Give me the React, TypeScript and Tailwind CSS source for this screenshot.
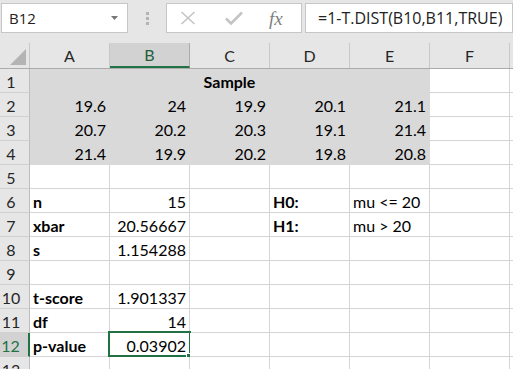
import React from "react";

const CELL_FONT = { fontFamily: "Lato, 'Liberation Sans', sans-serif" } as React.CSSProperties;

type C = { v?: string; b?: boolean; r?: boolean; g?: boolean };

const gridRows: C[][] = [
  [],
  [
    { v: "19.6", r: true, g: true },
    { v: "24", r: true, g: true },
    { v: "19.9", r: true, g: true },
    { v: "20.1", r: true, g: true },
    { v: "21.1", r: true, g: true },
    {},
    {},
  ],
  [
    { v: "20.7", r: true, g: true },
    { v: "20.2", r: true, g: true },
    { v: "20.3", r: true, g: true },
    { v: "19.1", r: true, g: true },
    { v: "21.4", r: true, g: true },
    {},
    {},
  ],
  [
    { v: "21.4", r: true, g: true },
    { v: "19.9", r: true, g: true },
    { v: "20.2", r: true, g: true },
    { v: "19.8", r: true, g: true },
    { v: "20.8", r: true, g: true },
    {},
    {},
  ],
  [{}, {}, {}, {}, {}, {}, {}],
  [{ v: "n", b: true }, { v: "15", r: true }, {}, { v: "H0:", b: true }, { v: "mu <= 20" }, {}, {}],
  [{ v: "xbar", b: true }, { v: "20.56667", r: true }, {}, { v: "H1:", b: true }, { v: "mu > 20" }, {}, {}],
  [{ v: "s", b: true }, { v: "1.154288", r: true }, {}, {}, {}, {}, {}],
  [{}, {}, {}, {}, {}, {}, {}],
  [{ v: "t-score", b: true }, { v: "1.901337", r: true }, {}, {}, {}, {}, {}],
  [{ v: "df", b: true }, { v: "14", r: true }, {}, {}, {}, {}, {}],
  [{ v: "p-value", b: true }, { v: "0.03902", r: true }, {}, {}, {}, {}, {}],
  [{}, {}, {}, {}, {}, {}, {}],
];

function RowHeader({ n, sel }: { n: number; sel?: boolean }) {
  return (
    <div
      className={
        "w-[30px] h-[24px] shrink-0 flex items-end justify-center pr-[7px] border-b border-[#d0d0d0] text-[16px] leading-[20px] " +
        (sel
          ? "bg-[#d2d2d2] text-[#217346] border-r-2 border-r-[#217346]"
          : "bg-[#e6e6e6] text-[#262626] border-r border-r-[#bdbdbd]")
      }
      style={CELL_FONT}
    >
      {n}
    </div>
  );
}

function Cell({ c, selected }: { c: C; selected?: boolean }) {
  return (
    <div
      className={
        "relative w-[80px] h-[24px] shrink-0 flex items-end border-r border-b text-[16px] leading-[20px] text-black whitespace-nowrap " +
        (c.g ? "bg-[#d9d9d9] border-[#d9d9d9] " : "bg-white border-[#d4d4d4] ") +
        (c.r ? "justify-end pr-[3px] " : "justify-start pl-[3px] ") +
        (c.b ? "font-bold" : "")
      }
      style={CELL_FONT}
    >
      {c.v}
      {selected && (
        <>
          <div className="absolute left-[-2px] top-[-2px] right-[-2px] bottom-[-1px] border-2 border-[#217346]" />
          <div className="absolute right-[-3px] bottom-[-3px] w-[6px] h-[6px] bg-[#217346] border border-white" />
        </>
      )}
    </div>
  );
}

export default function App() {
  const cols = ["A", "B", "C", "D", "E", "F", ""];
  return (
    <div className="w-[513px] h-[369px] overflow-hidden bg-white">
      {/* Formula bar */}
      <div className="h-[43px] bg-[#e6e6e6] flex items-start pt-[3px] pl-[1px]">
        <div
          className="w-[127px] h-[30px] shrink-0 bg-white border border-[#c6c6c6] flex items-center justify-between pl-[7px] pr-[9px] text-[15px] text-[#222]"
          style={{ fontFamily: "'Open Sans', 'Noto Sans', sans-serif" }}
        >
          <span>B12</span>
          <svg width="7" height="4" viewBox="0 0 7 4">
            <path d="M0 0 L7 0 L3.5 4 Z" fill="#777" />
          </svg>
        </div>
        <div className="w-[38px] h-[30px] shrink-0 flex flex-col items-center justify-center gap-[2px]">
          <div className="w-[3px] h-[3px] bg-[#b4b4b4]" />
          <div className="w-[3px] h-[3px] bg-[#b4b4b4]" />
          <div className="w-[3px] h-[3px] bg-[#b4b4b4]" />
        </div>
        <div className="w-[136px] h-[30px] shrink-0 bg-white border border-[#c6c6c6] flex items-center">
          <svg className="ml-[13px]" width="16" height="14" viewBox="0 0 16 14">
            <path d="M1.5 1 L14.5 13 M14.5 1 L1.5 13" stroke="#c4c4c4" strokeWidth="1.6" fill="none" />
          </svg>
          <svg className="ml-[29px]" width="18" height="14" viewBox="0 0 18 14">
            <path d="M1 7.5 L6 12.5 L17 1.5" stroke="#c4c4c4" strokeWidth="2.6" fill="none" />
          </svg>
          <span
            className="ml-[26px] italic text-[19px] leading-none text-[#7f7f7f]"
            style={{ fontFamily: "'Liberation Serif', serif" }}
          >
            fx
          </span>
        </div>
        <div
          className="ml-[3px] flex-1 h-[30px] bg-white border border-[#c6c6c6] flex items-center pl-[12px] text-[16px] text-[#222] whitespace-nowrap"
          style={{ fontFamily: "'Open Sans', 'Noto Sans', sans-serif" }}
        >
          =1-T.DIST(B10,B11,TRUE)
        </div>
      </div>

      {/* Column headers */}
      <div className="flex h-[26px] bg-[#e6e6e6] border-b border-[#ababab]">
        <div className="w-[30px] h-[25px] shrink-0 border-r border-[#c8c8c8] flex items-end justify-end pr-[3px] pb-[3px]">
          <svg width="16" height="16" viewBox="0 0 16 16">
            <path d="M16 0 L16 16 L0 16 Z" fill="#b4b4b4" />
          </svg>
        </div>
        {cols.map((c, idx) =>
          c === "B" ? (
            <div
              key={idx}
              className="w-[80px] h-[25px] shrink-0 bg-[#d2d2d2] border-r border-[#ababab] border-b-2 border-b-[#217346] flex items-center justify-center text-[16px] text-[#1f5f3c]"
              style={CELL_FONT}
            >
              {c}
            </div>
          ) : (
            <div
              key={idx}
              className="w-[80px] h-[25px] shrink-0 border-r border-[#c8c8c8] flex items-center justify-center text-[16px] text-[#262626]"
              style={CELL_FONT}
            >
              {c}
            </div>
          )
        )}
      </div>

      {/* Rows */}
      {gridRows.map((row, i) => (
        <div key={i} className="flex h-[24px]">
          <RowHeader n={i + 1} sel={i === 11} />
          {i === 0 ? (
            <>
              <div
                className="w-[400px] h-[24px] shrink-0 bg-[#d9d9d9] border-r border-b border-[#d9d9d9] flex items-end justify-center font-bold text-[16px] leading-[20px] text-black"
                style={CELL_FONT}
              >
                Sample
              </div>
              <Cell c={{}} />
              <Cell c={{}} />
            </>
          ) : (
            row.map((c, j) => <Cell key={j} c={c} selected={i === 11 && j === 1} />)
          )}
        </div>
      ))}
    </div>
  );
}
